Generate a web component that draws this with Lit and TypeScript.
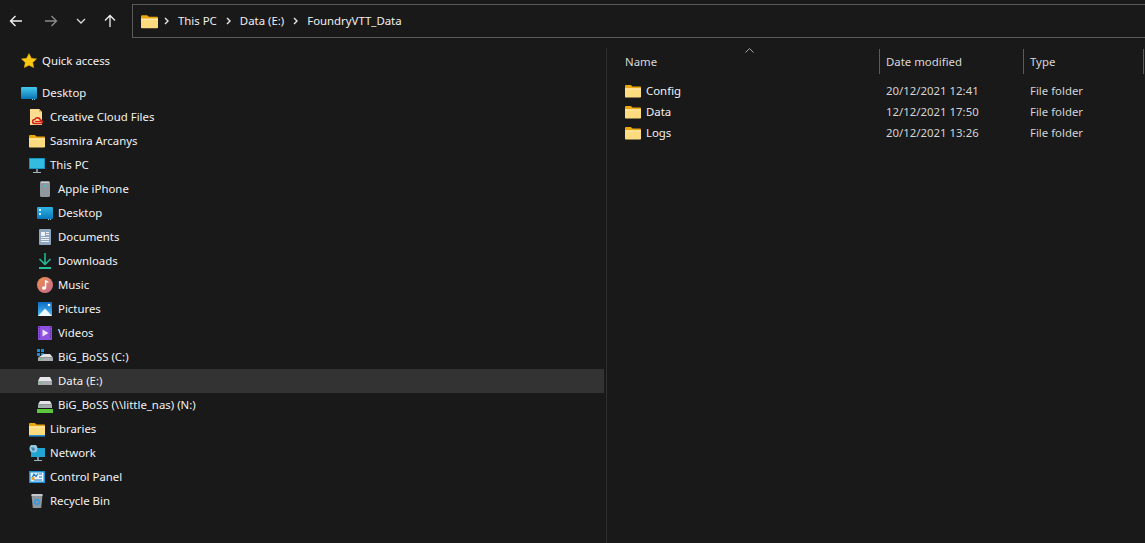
import { LitElement, html, css, svg } from 'lit';
import { customElement } from 'lit/decorators.js';

const folder = svg`<path d="M0 3.2C0 2.5.6 2 1.2 2h4.6l1.7 1.6H15c.6 0 1 .5 1 1V6H0z" fill="#eba70e"/><path d="M0 5.4h16v8c0 .6-.5 1-1 1H1c-.6 0-1-.4-1-1z" fill="#fddc80"/><rect y="5.4" width="16" height="1" fill="#fff0c0"/>`;

const icons: Record<string, unknown> = {
  star: svg`<path d="M8 .6l2.3 4.6 5.2.7-3.8 3.6 1 5.1L8 12.2l-4.7 2.4 1-5.1L.5 5.9l5.2-.7z" fill="#fbc813" stroke="#f4b400" stroke-width=".5"/>`,
  desktop: svg`<defs><linearGradient id="dk" x1="0" y1="0" x2="0" y2="1"><stop offset="0" stop-color="#45c8ec"/><stop offset="1" stop-color="#0a74b4"/></linearGradient></defs><rect x="0" y="2" width="16" height="12" rx="1" fill="url(#dk)"/><rect x="11" y="14" width="1" height="1" fill="#9cc"/><rect x="13" y="14" width="1" height="1" fill="#9cc"/>`,
  cloud: svg`<path d="M1 0h9l3 3v13H1z" fill="#fbdc90"/><path d="M10 0l3 3h-3z" fill="#e8b84c"/><path d="M5.5 14.5a2 2 0 0 1 .3-4 3 3 0 0 1 5.6.6 1.8 1.8 0 0 1 .8 3.4z" fill="none" stroke="#d4201c" stroke-width="1.6"/><path d="M6 12.5h6" stroke="#d4201c" stroke-width="1.2"/>`,
  folder,
  libraries: svg`${folder}<rect x="0" y="14" width="16" height="1.6" fill="#2a8cd0"/>`,
  pc: svg`<rect x="0" y="1" width="16" height="11" rx=".5" fill="#1794c8"/><rect x="1" y="2" width="14" height="9" fill="#33bcdf"/><rect x="7" y="12" width="2" height="3" fill="#7a8c96"/><rect x="4" y="15" width="8" height="1" fill="#a5b4bc"/>`,
  iphone: svg`<rect x="3" y="0" width="10" height="16" rx="1.5" fill="#8f979f"/><rect x="4" y="1" width="8" height="1" fill="#c8ccd0"/><rect x="7" y="4" width="2" height="2" fill="#41c4d8"/>`,
  desktop2: svg`<defs><linearGradient id="dk2" x1="0" y1="0" x2="0" y2="1"><stop offset="0" stop-color="#2fb4e4"/><stop offset="1" stop-color="#0a78ba"/></linearGradient></defs><rect x="0" y="2" width="16" height="12" rx="1" fill="url(#dk2)"/><rect x="2" y="4" width="2" height="2" fill="#d4f0ff"/><rect x="2" y="8" width="2" height="2" fill="#d4f0ff"/><rect x="11" y="14" width="1" height="1" fill="#9cc"/><rect x="13" y="14" width="1" height="1" fill="#9cc"/>`,
  documents: svg`<rect x="2" y="0" width="12" height="16" rx="1" fill="#8ea6c0"/><rect x="4" y="3" width="4" height="4" fill="#eef2f6"/><rect x="9" y="3" width="3" height="1" fill="#eef2f6"/><rect x="9" y="5" width="3" height="1" fill="#eef2f6"/><rect x="4" y="8" width="8" height="1" fill="#eef2f6"/><rect x="4" y="10" width="8" height="1" fill="#eef2f6"/><rect x="4" y="12" width="8" height="1" fill="#eef2f6"/>`,
  downloads: svg`<path d="M8 0v11M2.5 6L8 11.5 13.5 6" fill="none" stroke="#22c09a" stroke-width="1.5"/><rect x="2" y="14" width="12" height="2" fill="#22c09a"/>`,
  music: svg`<defs><linearGradient id="mu" x1="0" y1="0" x2="1" y2="1"><stop offset="0" stop-color="#f2904a"/><stop offset="1" stop-color="#c26a92"/></linearGradient></defs><circle cx="8" cy="8" r="8" fill="url(#mu)"/><path d="M8.6 3.2v7.6" stroke="#fff" stroke-width="1.4"/><path d="M8.6 3.2l2.8 1.3v1.6L8.6 5z" fill="#fff"/><ellipse cx="7" cy="11" rx="2.1" ry="1.7" fill="#fff"/>`,
  pictures: svg`<defs><linearGradient id="pi" x1="0" y1="0" x2="0" y2="1"><stop offset="0" stop-color="#0c6cc4"/><stop offset="1" stop-color="#50bcf4"/></linearGradient></defs><rect x="1" y="1" width="14" height="14" fill="url(#pi)"/><path d="M1 15l7-7.5L15 15z" fill="#eef8fe"/><circle cx="12" cy="4" r="1.3" fill="#fff"/>`,
  videos: svg`<rect x="1" y="1" width="14" height="14" rx="1" fill="#8f52e0"/><path d="M5.5 4.5l6 3.5-6 3.5z" fill="#eee4fe"/><path d="M2.5 2v12M13.5 2v12" stroke="#4a2c90" stroke-width="1.2" stroke-dasharray="1.2 1.2"/>`,
  osdrive: svg`<rect x="0" y="0" width="3" height="3" fill="#1c8ad8"/><rect x="4" y="0" width="3" height="3" fill="#1c8ad8"/><rect x="0" y="4" width="3" height="3" fill="#1c8ad8"/><rect x="4" y="4" width="3" height="3" fill="#1c8ad8"/><path d="M7 5h6l3 3.5H1z" fill="#e2e4e6"/><rect x="1" y="8.5" width="15" height="3.5" fill="#a8acb0"/><rect x="3" y="9.5" width="1.5" height="1" fill="#42d060"/>`,
  drive: svg`<path d="M3 4h10l2 4H1z" fill="#e4e6e8"/><rect x="1" y="8" width="14" height="4" rx=".5" fill="#a8acb0"/><rect x="3" y="9.5" width="1.5" height="1" fill="#42d060"/>`,
  netdrive: svg`<path d="M3 4h10l2 3.5H1z" fill="#e4e6e8"/><rect x="1" y="7.5" width="14" height="3.5" fill="#a8acb0"/><rect x="3" y="8.5" width="1.5" height="1" fill="#42d060"/><rect x="0" y="12" width="16" height="4" rx=".5" fill="#5cc93c"/>`,
  network: svg`<rect x="2" y="3" width="14" height="9" fill="#1fa4d4"/><rect x="8" y="12" width="2" height="3" fill="#7a8c96"/><rect x="5" y="15" width="8" height="1" fill="#a5b4bc"/><circle cx="4.5" cy="3.5" r="4" fill="#93c8e0"/><path d="M2 2.5h3l1 2-2 2z" fill="#3f86b0"/>`,
  control: svg`<rect x="0" y="2" width="16" height="12" fill="#1a8ed8"/><rect x="1.5" y="3.5" width="13" height="9" fill="#e8f2fa"/><path d="M3 9l2-4 2 2.5L9 4.5M10 5h3M10 8h3M5 11h8" fill="none" stroke="#1a78c0" stroke-width="1.2"/><rect x="2.5" y="8" width="3" height="3" fill="#f0a030"/>`,
  bin: svg`<path d="M2.5 2h11l-1.3 13H3.8z" fill="#8f979e"/><rect x="2.5" y="1" width="11" height="2" fill="#c4c8cc"/><circle cx="8" cy="9" r="2.3" fill="none" stroke="#2f9ae0" stroke-width="1.5"/>`,
};

// level: 0 = root item, 1 = child, 2 = grandchild
const nav = [
  { icon: 'star', label: 'Quick access', level: 0, gap: true },
  { icon: 'desktop', label: 'Desktop', level: 0, gap: false },
  { icon: 'cloud', label: 'Creative Cloud Files', level: 1 },
  { icon: 'folder', label: 'Sasmira Arcanys', level: 1 },
  { icon: 'pc', label: 'This PC', level: 1 },
  { icon: 'iphone', label: 'Apple iPhone', level: 2 },
  { icon: 'desktop2', label: 'Desktop', level: 2 },
  { icon: 'documents', label: 'Documents', level: 2 },
  { icon: 'downloads', label: 'Downloads', level: 2 },
  { icon: 'music', label: 'Music', level: 2 },
  { icon: 'pictures', label: 'Pictures', level: 2 },
  { icon: 'videos', label: 'Videos', level: 2 },
  { icon: 'osdrive', label: 'BiG_BoSS (C:)', level: 2 },
  { icon: 'drive', label: 'Data (E:)', level: 2, selected: true },
  { icon: 'netdrive', label: 'BiG_BoSS (\\\\little_nas) (N:)', level: 2 },
  { icon: 'libraries', label: 'Libraries', level: 1 },
  { icon: 'network', label: 'Network', level: 1 },
  { icon: 'control', label: 'Control Panel', level: 1 },
  { icon: 'bin', label: 'Recycle Bin', level: 1 },
];

const files = [
  { name: 'Config', date: '20/12/2021 12:41' },
  { name: 'Data', date: '12/12/2021 17:50' },
  { name: 'Logs', date: '20/12/2021 13:26' },
];

const crumb = svg`<path d="M1 1l3 3-3 3" fill="none" stroke="#e8e8e8" stroke-width="1.4"/>`;

@customElement('app-root')
export class AppRoot extends LitElement {
  static styles = css`
    :host {
      display: block;
      width: 1145px;
      height: 543px;
      overflow: hidden;
      background: #191919;
      color: #fff;
      font: 11.4px 'Noto Sans', sans-serif;
    }

    .toolbar {
      display: flex;
      align-items: center;
      height: 34px;
      padding-top: 4px;
    }

    .nav-btns {
      width: 132px;
      height: 34px;
      display: grid;
      grid-template-columns: 32px 38px 22px 36px;
      align-items: center;
      justify-items: center;
      flex: none;
    }

    .address {
      flex: 1;
      height: 32px;
      display: flex;
      align-items: center;
      gap: 9px;
      padding-left: 8px;
      border: 1px solid #5a5a5a;
      border-right: none;
      white-space: nowrap;
      color: #f0f0f0;
    }

    .address span {
      padding-bottom: 1px;
    }

    .address .folder {
      width: 17px;
      height: 17px;
      margin-right: -3px;
    }

    .main {
      display: flex;
      height: 505px;
    }

    .sidebar {
      width: 604px;
      flex: none;
      padding-top: 11px;
      box-sizing: border-box;
    }

    .divider {
      width: 1px;
      margin: 10px 0 0 2px;
      background: #2f2f2f;
      flex: none;
    }

    .row {
      display: flex;
      align-items: center;
      height: 24px;
      gap: 5px;
      white-space: nowrap;
      color: #f2f2f2;
    }

    .row span {
      padding-bottom: 1px;
    }

    .row.gap {
      margin-bottom: 8px;
    }

    .row.selected {
      background: #333;
    }

    .l0 { padding-left: 21px; }
    .l1 { padding-left: 29px; }
    .l2 { padding-left: 37px; }

    .row svg {
      width: 16px;
      height: 16px;
      flex: none;
    }

    .content {
      flex: 1;
      padding-top: 11px;
      position: relative;
      min-width: 0;
    }

    .caret {
      position: absolute;
      left: 138px;
      top: 10px;
      width: 9px;
      height: 5px;
    }

    .head, .file {
      display: grid;
      grid-template-columns: 273px 144px 120px;
    }

    .head {
      height: 25px;
      align-items: center;
      color: #d8d8d8;
      margin-bottom: 6px;
    }

    .head div {
      height: 25px;
      line-height: 25px;
      border-right: 1px solid #5c5c5c;
      padding-left: 6px;
      box-sizing: border-box;
    }

    .head div:first-child {
      padding-left: 18px;
    }

    .file {
      height: 21px;
      align-items: center;
      color: #d4d4d4;
    }

    .file .cell {
      padding-left: 6px;
      white-space: nowrap;
    }

    .file .name {
      display: flex;
      align-items: center;
      gap: 5px;
      padding-left: 18px;
      color: #f2f2f2;
    }

    .file svg {
      width: 16px;
      height: 16px;
      flex: none;
    }
  `;

  render() {
    return html`
      <div class="toolbar">
        <div class="nav-btns">
          <svg width="14" height="14" viewBox="0 0 14 14"><path d="M13 7H1.5M6.5 2L1.5 7l5 5" fill="none" stroke="#f0f0f0" stroke-width="1.4"/></svg>
          <svg width="14" height="14" viewBox="0 0 14 14"><path d="M1 7h11.5M7.5 2l5 5-5 5" fill="none" stroke="#8a8a8a" stroke-width="1.4"/></svg>
          <svg width="10" height="6" viewBox="0 0 10 6"><path d="M1 1l4 4 4-4" fill="none" stroke="#d8d8d8" stroke-width="1.3"/></svg>
          <svg width="14" height="14" viewBox="0 0 14 14"><path d="M7 13V1.5M2 6.5l5-5 5 5" fill="none" stroke="#f0f0f0" stroke-width="1.3"/></svg>
        </div>
        <div class="address">
          <svg class="folder" viewBox="0 0 16 16">${folder}</svg>
          <svg width="5" height="8" viewBox="0 0 5 8">${crumb}</svg>
          <span>This PC</span>
          <svg width="5" height="8" viewBox="0 0 5 8">${crumb}</svg>
          <span>Data (E:)</span>
          <svg width="5" height="8" viewBox="0 0 5 8">${crumb}</svg>
          <span>FoundryVTT_Data</span>
        </div>
      </div>
      <div class="main">
        <div class="sidebar">
          ${nav.map(
            (n) => html`
              <div class="row l${n.level} ${n.gap ? 'gap' : ''} ${n.selected ? 'selected' : ''}">
                <svg viewBox="0 0 16 16">${icons[n.icon]}</svg>
                <span>${n.label}</span>
              </div>
            `,
          )}
        </div>
        <div class="divider"></div>
        <div class="content">
          <svg class="caret" viewBox="0 0 9 5"><path d="M.5 4.5l4-4 4 4" fill="none" stroke="#a8a8a8"/></svg>
          <div class="head">
            <div>Name</div>
            <div>Date modified</div>
            <div>Type</div>
          </div>
          ${files.map(
            (f) => html`
              <div class="file">
                <div class="cell name">
                  <svg viewBox="0 0 16 16">${folder}</svg>
                  <span>${f.name}</span>
                </div>
                <div class="cell">${f.date}</div>
                <div class="cell">File folder</div>
              </div>
            `,
          )}
        </div>
      </div>
    `;
  }
}
